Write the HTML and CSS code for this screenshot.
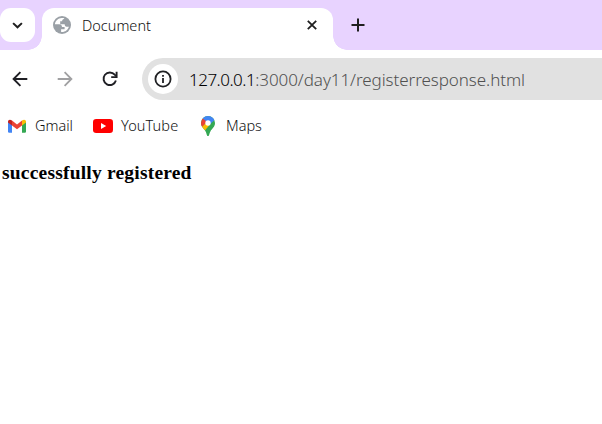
FILE: index.html
```html
<!DOCTYPE html>
<html lang="en">
<head>
<meta charset="utf-8">
<title>Document</title>
<link rel="stylesheet" href="styles.css">
</head>
<body>
<header class="tabstrip">
  <button class="search-tabs" aria-label="Search tabs"><svg width="35" height="34" viewBox="0 0 35 34"><path d="M13.1 15.1l4.4 4.2 4.4-4.2" fill="none" stroke="#1f1f1f" stroke-width="2"/></svg></button>
  <div class="tab">
    <svg class="globe" width="18" height="18" viewBox="0 0 18 18"><circle cx="9" cy="9" r="9" fill="#9aa0a6"/><path d="M8.7 1.9C5.2 2 2.3 4.700 1.900 8.200H6.100C8 8.200 9 9.300 9 11H11.600V13.300H8.100V15.900C11.700 16.400 15 14 15.900 10.700H13.600C12.300 10.700 11.700 9.800 11.700 8.300H7.200V5.300H9.100C9.100 4 9.700 3.200 11 3L11.300 2.300C10.500 2 9.600 1.900 8.700 1.900Z" fill="#fff"/></svg>
    <span class="tab-title">Document</span>
    <svg class="close" width="10" height="10" viewBox="0 0 10 10"><path d="M.8.8l8.400 8.400M9.200.8L.8 9.200" stroke="#1f1f1f" stroke-width="1.800"/></svg>
  </div>
  <svg class="plus" width="14" height="14" viewBox="0 0 14 14"><path d="M7 .5v13M.5 7h13" stroke="#1f1f1f" stroke-width="2"/></svg>
</header>
<nav class="toolbar">
  <svg class="nav-icon" width="16" height="16" viewBox="0 0 16 16"><path d="M15.300 8H2M8.400 1.200L1.600 8l6.800 6.800" fill="none" stroke="#1f1f24" stroke-width="1.900"/></svg>
  <svg class="nav-icon" width="16" height="16" viewBox="0 0 16 16"><path d="M.7 8H14M7.600 1.200L14.400 8l-6.800 6.800" fill="none" stroke="#a0a0a2" stroke-width="1.800"/></svg>
  <svg class="nav-icon" width="16" height="16" viewBox="0 0 16 16"><path d="M13.900 9.500A6.300 6.300 0 1 1 12.700 3.700L14.200 5.200" fill="none" stroke="#1f1f24" stroke-width="1.900"/><path d="M14.600.8V6.100H9.200" fill="none" stroke="#1f1f24" stroke-width="1.900"/></svg>
  <div class="omnibox">
    <span class="info"><svg width="18" height="18" viewBox="0 0 18 18"><circle cx="9" cy="9" r="7.600" fill="none" stroke="#202124" stroke-width="1.800"/><path d="M9 8v5M9 4.900v1.900" stroke="#202124" stroke-width="1.800"/></svg></span>
    <span class="url"><b>127.0.0.1</b>:3000/day11/registerresponse.html</span>
  </div>
</nav>
<nav class="bookmarks">
  <a class="bookmark gmail"><svg width="18" height="14" viewBox="0 0 18 14"><path d="M0 2.500L4 5v8.800H1.200Q0 13.800 0 12.600Z" fill="#4285f4"/><path d="M18 2.500L14 5v8.800h2.800q1.200 0 1.200-1.200Z" fill="#34a853"/><path d="M4 1.500L9 5.400l5-3.900V6.400L9 10.200 4 6.400Z" fill="#ea4335"/><path d="M14 1.500C16 .1 18 .7 18 2.800v.8L14 6.500Z" fill="#fbbc04"/><path d="M4 1.500C2 .1 0 .7 0 2.800v.8L4 6.500Z" fill="#c5221f"/></svg><span>Gmail</span></a>
  <a class="bookmark youtube"><svg width="20" height="14" viewBox="0 0 20 14"><rect width="20" height="14" rx="3.200" fill="#f00"/><path d="M8 4l5.200 3L8 10Z" fill="#fff"/></svg><span>YouTube</span></a>
  <a class="bookmark maps"><svg width="14" height="20" viewBox="0 0 14 20"><defs><clipPath id="pin"><path d="M7 0a7 7 0 0 1 7 7c0 4-3 5.500-4.600 8.400C8.300 17.300 8.300 20 7 20s-1.300-2.700-2.400-4.600C3 12.500 0 11 0 7a7 7 0 0 1 7-7Z"/></clipPath></defs><g clip-path="url(#pin)"><path d="M0 0h14v20H0Z" fill="#34a853"/><path d="M1.400 2.400L3 0h9l1.500 4L7 10Z" fill="#4285f4"/><path d="M-1 7L1.500 2.200 6 6 1 11.500Z" fill="#ea4335"/><path d="M0 12L6 6l3 2.500-6 7Z" fill="#fbbc04"/></g><circle cx="7" cy="7" r="2.700" fill="#fff"/></svg><span>Maps</span></a>
</nav>
<main><h1>successfully registered</h1></main>
</body>
</html>
```
FILE: styles.css
```css
* { box-sizing: border-box; }
body { margin: 0; width: 602px; height: 424px; overflow: hidden; background: #fff; color: #111; font-family: "Noto Sans", "Open Sans", sans-serif; }
svg { display: block; flex: none; }
.tabstrip { display: flex; height: 50px; padding-top: 8px; background: #e8d3ff; }
.search-tabs { width: 35px; height: 34px; padding: 0; border: 0; border-radius: 11px; background: #fff; }
.tab { position: relative; display: flex; width: 291px; height: 42px; margin-left: 7px; padding: 0 16px 8px 11px; align-items: center; border-radius: 12px 12px 0 0; background: #fff; }
.tab::before, .tab::after { content: ""; position: absolute; bottom: 0; width: 14px; height: 14px; }
.tab::before { right: 100%; background: radial-gradient(circle at 0 0, transparent 13.5px, #fff 14px); }
.tab::after { left: 100%; background: radial-gradient(circle at 100% 0, transparent 13.5px, #fff 14px); }
.tab-title { margin-left: 11px; font-size: 14.5px; font-weight: 300; line-height: 20px; }
.close { margin-left: auto; }
.plus { margin: 10px 0 0 18px; }
.toolbar { display: flex; height: 58px; padding: 8px 0 8px 12px; align-items: center; }
.nav-icon { margin-right: 29px; }
.omnibox { display: flex; flex: 1; align-items: center; height: 42px; margin-left: -5px; padding-left: 6px; border-radius: 21px 0 0 21px; background: #e1e1e1; }
.info { display: flex; width: 30px; height: 30px; align-items: center; justify-content: center; border-radius: 50%; background: #fff; }
.url { margin-left: 11px; padding-top: 1px; color: #505050; font-size: 17px; font-weight: 300; letter-spacing: -.06px; line-height: 24px; white-space: nowrap; }
.url b { color: #000; font-weight: 300; letter-spacing: -.5px; }
.bookmarks { display: flex; height: 36px; padding-left: 8px; align-items: center; font-size: 14.5px; font-weight: 300; line-height: 20px; }
.bookmark { display: flex; align-items: center; }
.bookmark span { padding-bottom: 1.5px; }
.gmail { width: 85px; gap: 9px; }
.youtube { width: 108px; gap: 8px; letter-spacing: .1px; }
.maps { gap: 11px; }
main { padding: 18px 2px; }
h1 { margin: 0; color: #000; font: bold 19.5px/22px "Liberation Serif", serif; letter-spacing: .2px; }
```
